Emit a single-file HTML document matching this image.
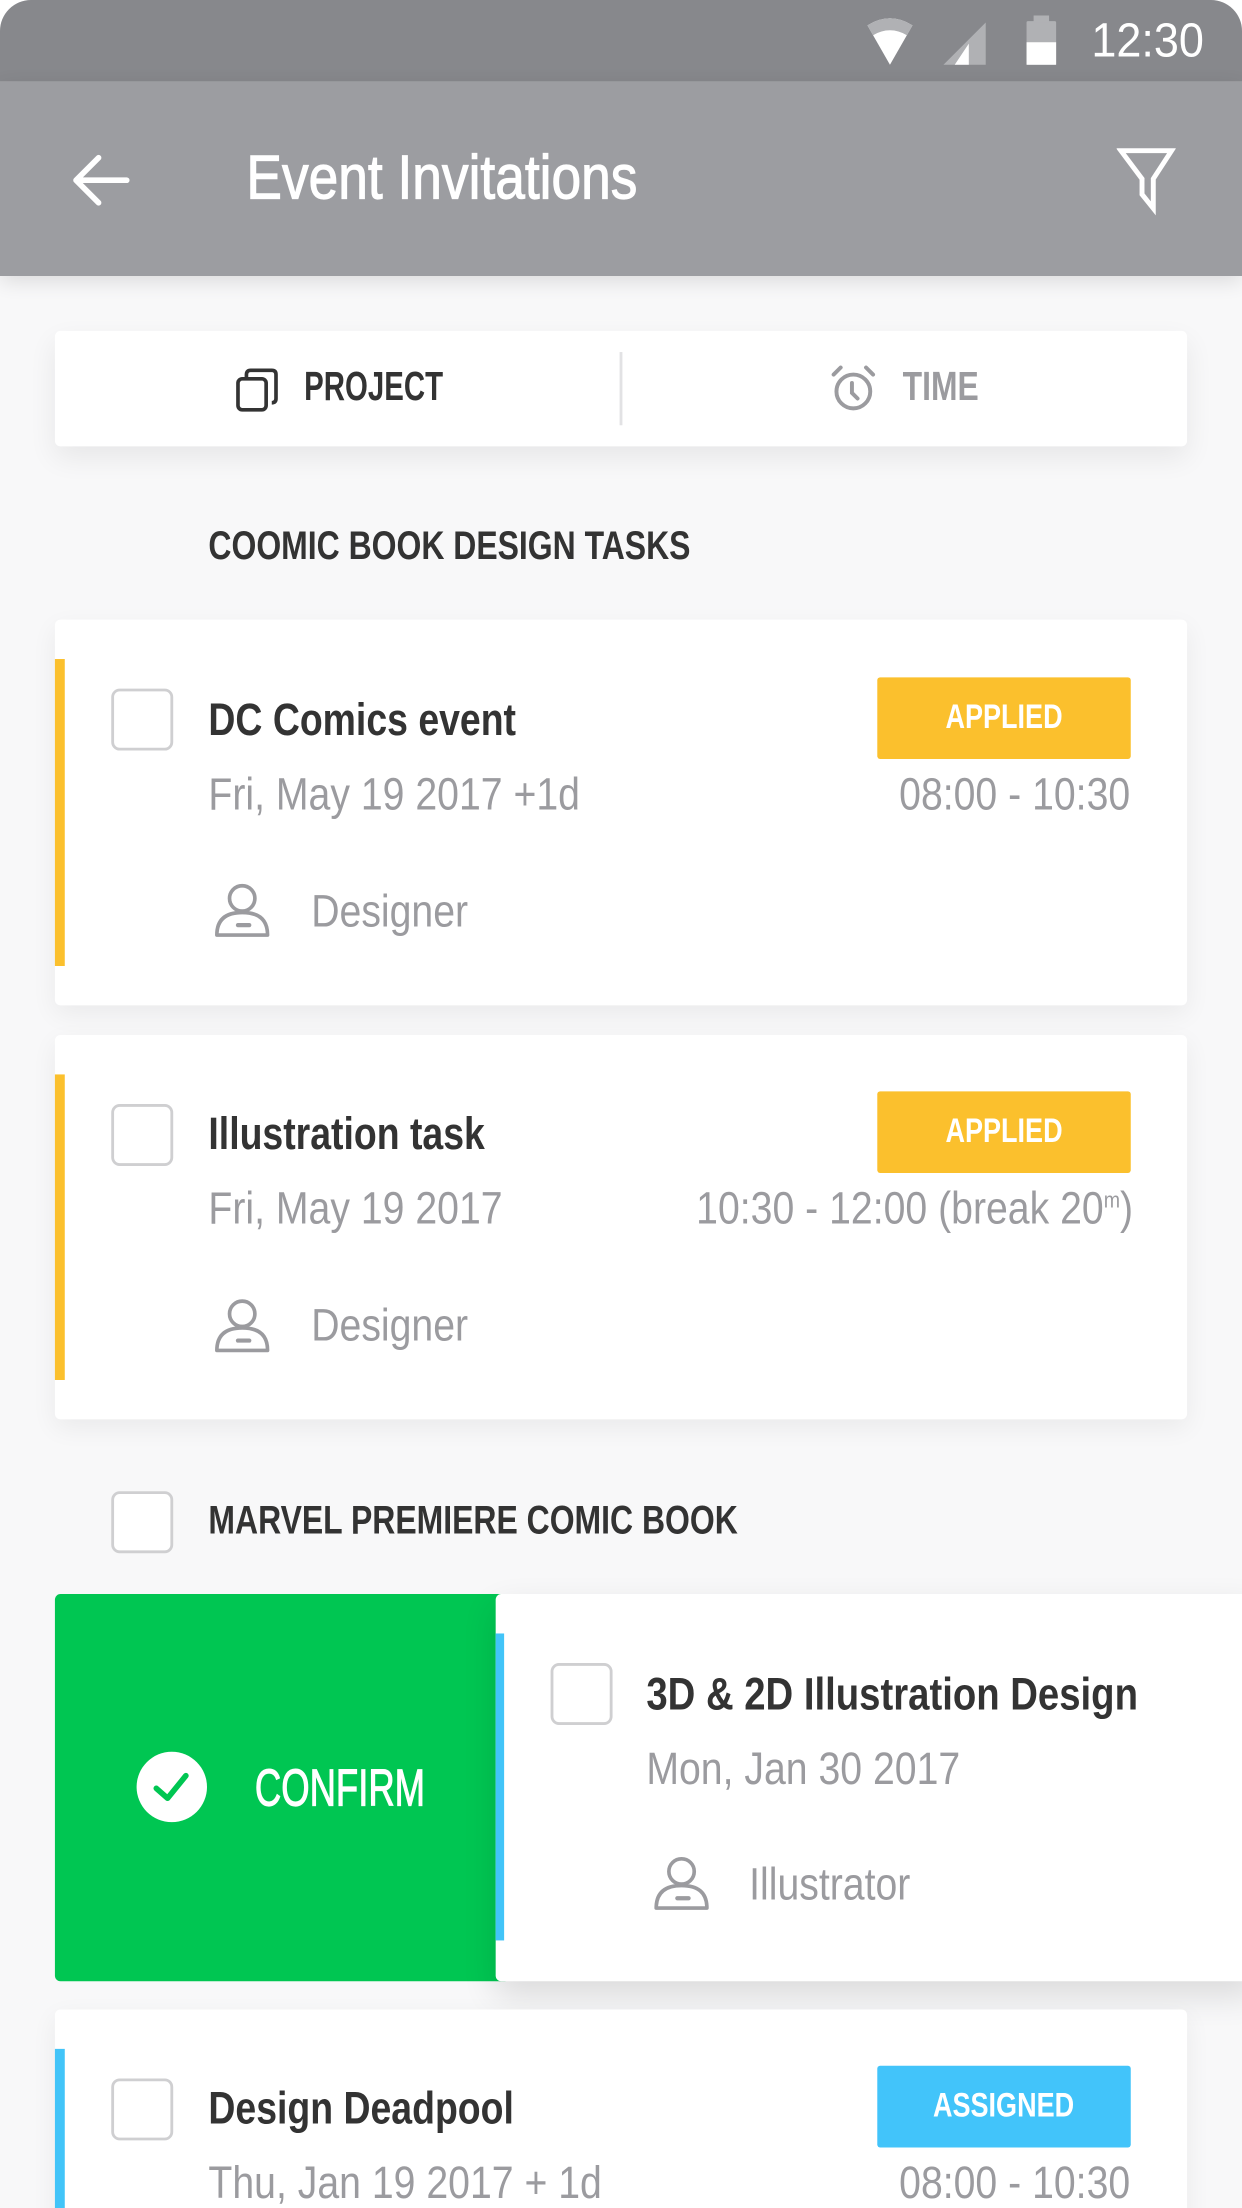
<!DOCTYPE html>
<html><head><meta charset="utf-8">
<style>
*{margin:0;padding:0;box-sizing:border-box}
html,body{width:1242px;height:2208px;overflow:hidden;background:#fff}
#s{position:absolute;left:0;top:0;width:882px;height:1568px;transform:scale(1.408163);transform-origin:0 0;background:#f8f8f9;overflow:hidden;border-radius:22px 22px 0 0;font-family:"Liberation Sans Narrow","Liberation Sans",sans-serif}
.a{position:absolute}
.t{position:absolute;white-space:nowrap;line-height:1;transform-origin:0 50%}
.r{transform-origin:100% 50%}
.card{position:absolute;background:#fff;border-radius:4px;box-shadow:0 6px 18px rgba(0,0,0,.06)}
.cb{position:absolute;width:44px;height:44px;border:2px solid #cfcfd1;border-radius:6px;background:#fff}
.title{font-size:32px;color:#333;font-weight:bold;transform:scaleX(.83)}
.gray{font-size:32px;color:#9b9b9f;transform:scaleX(.87)}
.badge{position:absolute;width:180px;height:58px;color:#fff;font-size:24px;font-weight:bold;display:flex;align-items:center;justify-content:center;border-radius:2px}
.badge span{display:inline-block;transform:scaleX(.8)}
.hd{font-size:28px;font-weight:bold;color:#333;transform:scaleX(.81)}
</style></head><body><div id="s">
<div class="a" style="left:0;top:0;width:882px;height:58px;background:#87888c"></div>
<svg class="a" style="left:612px;top:12px" width="100" height="36" viewBox="0 0 100 36">
<path d="M4 6 Q20 -4 36 6 L20 34 Z" fill="#fff"/>
<path d="M4 6 Q20 -4 36 6 L32 13 Q20 6 8 13Z" fill="#b0b1b4"/>
<path d="M88 4 L88 34 L58 34 Z" fill="#b0b1b4"/>
<path d="M76 19 L76 34 L66 34 Z" fill="#fff"/>
</svg>
<div class="a" style="left:729px;top:15px;width:21px;height:31px;background:#b0b1b4;border-radius:1px"></div>
<div class="a" style="left:734px;top:11px;width:11px;height:5px;background:#b0b1b4"></div>
<div class="a" style="left:729px;top:30px;width:21px;height:16px;background:#fff"></div>
<div class="t" style="left:775px;top:12px;font-size:34px;color:#fff;transform:scaleX(.94)">12:30</div>
<div class="a" style="left:0;top:58px;width:882px;height:138px;background:#9c9da1;box-shadow:0 4px 14px rgba(0,0,0,.12)"></div>
<svg class="a" style="left:48px;top:108px" width="46" height="40" viewBox="0 0 46 40"><path d="M42 20H6M22 4L6 20L22 36" stroke="#fff" stroke-width="4" fill="none" stroke-linecap="round" stroke-linejoin="round"/></svg>
<div class="t" style="left:175px;top:105px;font-size:44px;color:#fff;transform:scaleX(.86);-webkit-text-stroke:.8px #fff">Event Invitations</div>
<svg class="a" style="left:793px;top:103px" width="42" height="50" viewBox="0 0 42 50"><path d="M3 4H39L26 24V45L18 35V24Z" stroke="#fff" stroke-width="3.5" fill="none" stroke-linejoin="miter"/></svg>

<div class="card" style="left:39px;top:235px;width:804px;height:82px;box-shadow:0 8px 20px rgba(0,0,0,.07)"></div>
<div class="a" style="left:440px;top:250px;width:2px;height:52px;background:#e2e2e4"></div>
<svg class="a" style="left:166px;top:260px" width="34" height="34" viewBox="0 0 34 34"><rect x="3" y="9" width="20" height="22" rx="3" stroke="#333" stroke-width="2.6" fill="none"/><path d="M9 8V6Q9 3 12 3H27Q30 3 30 6V23Q30 26 27 26" stroke="#333" stroke-width="2.6" fill="none"/></svg>
<div class="t" style="left:216px;top:261px;font-size:29px;font-weight:bold;color:#333;transform:scaleX(.72)">PROJECT</div>
<svg class="a" style="left:588px;top:258px" width="36" height="36" viewBox="0 0 36 36"><circle cx="18" cy="20" r="12" stroke="#9b9b9f" stroke-width="2.8" fill="none"/><path d="M17 14V21L21 25M4 8L9 3M32 8L27 3" stroke="#9b9b9f" stroke-width="2.8" fill="none" stroke-linecap="round"/></svg>
<div class="t" style="left:641px;top:261px;font-size:29px;font-weight:bold;color:#9b9b9f;transform:scaleX(.78)">TIME</div>

<div class="t hd" style="left:148px;top:374px">COOMIC BOOK DESIGN TASKS</div>

<!-- card 1 -->
<div class="card" style="left:39px;top:440px;width:804px;height:274px"></div>
<div class="a" style="left:39px;top:468px;width:7px;height:218px;background:#fbc02d"></div>
<div class="cb" style="left:79px;top:489px"></div>
<div class="t title" style="left:148px;top:495px">DC Comics event</div>
<div class="t gray" style="left:148px;top:548px">Fri, May 19 2017 +1d</div>
<div class="badge" style="left:623px;top:481px;background:#fbc02d"><span>APPLIED</span></div>
<div class="t gray r" style="right:79px;top:548px">08:00 - 10:30</div>
<svg class="a" style="left:150px;top:626px" width="44" height="42" viewBox="0 0 44 42"><circle cx="22" cy="12" r="9" stroke="#9b9b9f" stroke-width="2.6" fill="none"/><path d="M4 38Q4 22 22 22Q40 22 40 38Z" stroke="#9b9b9f" stroke-width="2.6" fill="none" stroke-linejoin="round"/><path d="M19 31H27" stroke="#9b9b9f" stroke-width="3" stroke-linecap="round"/></svg>
<div class="t gray" style="left:221px;top:631px">Designer</div>

<!-- card 2 -->
<div class="card" style="left:39px;top:735px;width:804px;height:273px"></div>
<div class="a" style="left:39px;top:763px;width:7px;height:217px;background:#fbc02d"></div>
<div class="cb" style="left:79px;top:784px"></div>
<div class="t title" style="left:148px;top:789px">Illustration task</div>
<div class="t gray" style="left:148px;top:842px">Fri, May 19 2017</div>
<div class="badge" style="left:623px;top:775px;background:#fbc02d"><span>APPLIED</span></div>
<div class="t gray r" style="right:77px;top:842px">10:30 - 12:00 (break 20<sup style="font-size:16px">m</sup>)</div>
<svg class="a" style="left:150px;top:921px" width="44" height="42" viewBox="0 0 44 42"><circle cx="22" cy="12" r="9" stroke="#9b9b9f" stroke-width="2.6" fill="none"/><path d="M4 38Q4 22 22 22Q40 22 40 38Z" stroke="#9b9b9f" stroke-width="2.6" fill="none" stroke-linejoin="round"/><path d="M19 31H27" stroke="#9b9b9f" stroke-width="3" stroke-linecap="round"/></svg>
<div class="t gray" style="left:221px;top:925px">Designer</div>

<div class="cb" style="left:79px;top:1059px"></div>
<div class="t hd" style="left:148px;top:1066px">MARVEL PREMIERE COMIC BOOK</div>

<!-- swipe card -->
<div class="a" style="left:39px;top:1132px;width:320px;height:275px;background:#00c652;border-radius:4px 0 0 4px"></div>
<div class="a" style="left:97px;top:1244px;width:50px;height:50px;border-radius:50%;background:#fff"></div>
<svg class="a" style="left:97px;top:1244px" width="50" height="50" viewBox="0 0 50 50"><path d="M14 26L22 33L35 17" stroke="#00c652" stroke-width="4" fill="none" stroke-linecap="round" stroke-linejoin="round"/></svg>
<div class="t" style="left:181px;top:1251px;font-size:37px;color:#fff;transform:scaleX(.7);-webkit-text-stroke:.8px #fff">CONFIRM</div>
<div class="a" style="left:352px;top:1132px;width:540px;height:275px;background:#fff;border-radius:4px 0 0 4px;box-shadow:0 10px 24px rgba(0,0,0,.12)"></div>
<div class="a" style="left:352px;top:1160px;width:6px;height:218px;background:#42c4f8"></div>
<div class="cb" style="left:391px;top:1181px"></div>
<div class="t title" style="left:459px;top:1187px;transform:scaleX(.85)">3D &amp; 2D Illustration Design</div>
<div class="t gray" style="left:459px;top:1240px">Mon, Jan 30 2017</div>
<svg class="a" style="left:462px;top:1317px" width="44" height="42" viewBox="0 0 44 42"><circle cx="22" cy="12" r="9" stroke="#9b9b9f" stroke-width="2.6" fill="none"/><path d="M4 38Q4 22 22 22Q40 22 40 38Z" stroke="#9b9b9f" stroke-width="2.6" fill="none" stroke-linejoin="round"/><path d="M19 31H27" stroke="#9b9b9f" stroke-width="3" stroke-linecap="round"/></svg>
<div class="t gray" style="left:532px;top:1322px">Illustrator</div>

<!-- card 4 -->
<div class="card" style="left:39px;top:1427px;width:804px;height:200px"></div>
<div class="a" style="left:39px;top:1455px;width:7px;height:150px;background:#42c4f8"></div>
<div class="cb" style="left:79px;top:1476px"></div>
<div class="t title" style="left:148px;top:1481px">Design Deadpool</div>
<div class="badge" style="left:623px;top:1467px;background:#42c4fa"><span>ASSIGNED</span></div>
<div class="t gray" style="left:148px;top:1534px">Thu, Jan 19 2017 + 1d</div>
<div class="t gray r" style="right:79px;top:1534px">08:00 - 10:30</div>
</div></body></html>
